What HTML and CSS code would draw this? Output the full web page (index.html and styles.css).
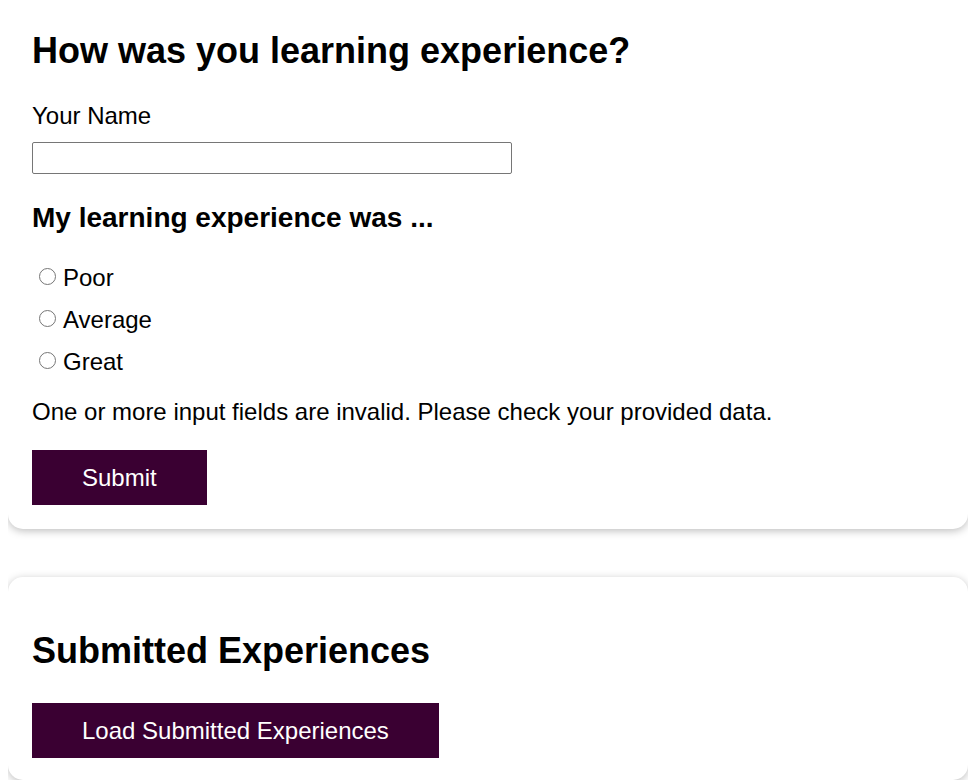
FILE: index.html
```html
<!DOCTYPE html>
<html lang="en">
<head>
<meta charset="utf-8">
<title>Learning Survey</title>
<link rel="stylesheet" href="styles.css">
</head>
<body>
<section class="card card-first">
  <form class="survey">
    <h1 class="title">How was you learning experience?</h1>
    <label class="label" for="name">Your Name</label>
    <input class="text-input" type="text" id="name" name="name">
    <h2 class="subtitle">My learning experience was ...</h2>
    <div class="options">
      <div class="option"><input class="radio" type="radio" id="rating-poor" name="rating" value="poor"><label for="rating-poor">Poor</label></div>
      <div class="option"><input class="radio" type="radio" id="rating-average" name="rating" value="average"><label for="rating-average">Average</label></div>
      <div class="option"><input class="radio" type="radio" id="rating-great" name="rating" value="great"><label for="rating-great">Great</label></div>
    </div>
    <p class="error">One or more input fields are invalid. Please check your provided data.</p>
    <button class="btn" type="button">Submit</button>
  </form>
</section>
<section class="card card-second">
  <h2 class="title title-second">Submitted Experiences</h2>
  <button class="btn" type="button">Load Submitted Experiences</button>
</section>
</body>
</html>
```
FILE: styles.css
```css
html, body {
  background: #ffffff;
}
body {
  margin: 0 8px;
  font-family: "Liberation Sans", Arial, sans-serif;
  font-size: 24px;
  color: #000000;
}
.card {
  background: #ffffff;
  border-radius: 15px;
  box-shadow: 0 2px 9px rgba(0, 0, 0, 0.26);
  padding: 24px;
}
.card-first {
  margin-top: -18px;
}
.card-second {
  margin-top: 48px;
  padding-bottom: 22px;
}
.survey {
  display: flex;
  flex-direction: column;
  align-items: flex-start;
}
.title {
  font-size: 36px;
  font-weight: bold;
  line-height: 41px;
  margin: 24px 0 0 0;
}
.title-second {
  margin: 29px 0 0 0;
}
.label {
  display: block;
  line-height: 28px;
  margin-top: 31px;
}
.text-input {
  box-sizing: border-box;
  width: 480px;
  height: 32px;
  margin: 12px 0 0 0;
  border: 1px solid #767676;
  border-radius: 2px;
  padding: 1px 2px;
  font: inherit;
  font-size: 16px;
}
.subtitle {
  font-size: 28px;
  font-weight: bold;
  line-height: 32px;
  margin: 28px 0 0 0;
}
.options {
  display: flex;
  flex-direction: column;
  gap: 14px;
  margin-top: 30px;
}
.option {
  display: flex;
  align-items: center;
  line-height: 28px;
}
.radio {
  -webkit-appearance: none;
  appearance: none;
  box-sizing: border-box;
  width: 17px;
  height: 17px;
  border: 1px solid #767676;
  border-radius: 50%;
  background: #ffffff;
  margin: -4px 7px 0 7px;
  flex: none;
}
.error {
  line-height: 28px;
  margin: 22px 0 0 0;
}
.btn {
  display: block;
  margin-top: 24px;
  background: #3a0032;
  color: #ffffff;
  border: none;
  border-radius: 0;
  font-family: "Liberation Sans", Arial, sans-serif;
  font-size: 24px;
  line-height: 29px;
  padding: 13px 50px;
  cursor: pointer;
}
.card-second .btn {
  margin-top: 32px;
}
```
